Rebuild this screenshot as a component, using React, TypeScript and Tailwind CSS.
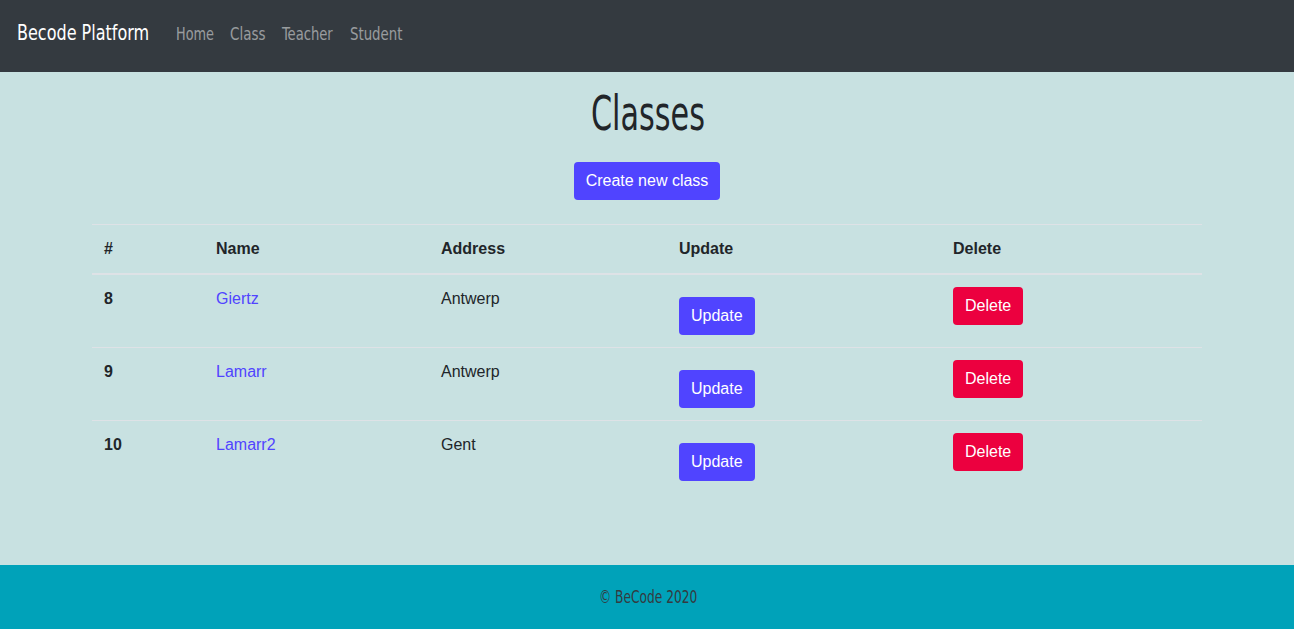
const rows = [
  { id: 8, name: 'Giertz', address: 'Antwerp' },
  { id: 9, name: 'Lamarr', address: 'Antwerp' },
  { id: 10, name: 'Lamarr2', address: 'Gent' },
];

const condensed = "font-['DejaVu_Sans_Condensed','DejaVu_Sans',sans-serif]";

// squeezes the condensed face to the narrow display look of the original
function Narrow({ box, scale, children }: { box: string; scale: string; children: string }) {
  return (
    <span className={`inline-block ${box}`}>
      <span className={`inline-block origin-left whitespace-nowrap ${scale}`}>{children}</span>
    </span>
  );
}

export default function App() {
  return (
    <div className="flex min-h-[629px] flex-col bg-[#c8e1e1] font-['Liberation_Sans',Arial,sans-serif] text-[#212529]">
      <nav className={`${condensed} flex h-[72px] items-center bg-[#343a40] pb-[6px] pl-[17px]`}>
        <a className="mr-6 text-[22px] leading-[30px] text-white">
          <Narrow box="w-[135px]" scale="scale-x-[0.81]">Becode Platform</Narrow>
        </a>
        <ul className="flex gap-[17px] pt-[1px] text-[17px] leading-[24px] text-white/50">
          <li><Narrow box="w-[37px]" scale="scale-x-[0.84]">Home</Narrow></li>
          <li><Narrow box="w-[35px]" scale="scale-x-[0.88]">Class</Narrow></li>
          <li><Narrow box="w-[51px]" scale="scale-x-[0.86]">Teacher</Narrow></li>
          <li><Narrow box="w-[52px]" scale="scale-x-[0.87]">Student</Narrow></li>
        </ul>
      </nav>

      <main className="flex-1">
        <div className="mx-auto w-[1110px]">
          <h1 className={`${condensed} mt-[12px] text-center text-[48px] leading-[58px]`}>
            <Narrow box="w-[113px]" scale="scale-x-[0.70]">Classes</Narrow>
          </h1>
          <div className="mt-[20px] flex justify-center">
            <button className="h-[38px] rounded bg-[#5044ff] px-3 text-[16px] text-white">Create new class</button>
          </div>
          <table className="mt-[24px] w-full border-collapse text-left text-[16px]">
            <thead>
              <tr className="border-t border-b-2 border-[#dee2e6]">
                <th className="w-[112px] px-3 py-3 leading-6">#</th>
                <th className="w-[225px] px-3 py-3 leading-6">Name</th>
                <th className="w-[238px] px-3 py-3 leading-6">Address</th>
                <th className="w-[274px] px-3 py-3 leading-6">Update</th>
                <th className="px-3 py-3 leading-6">Delete</th>
              </tr>
            </thead>
            <tbody>
              {rows.map((r) => (
                <tr key={r.id} className="border-t border-[#dee2e6] align-top first:border-t-0">
                  <td className="px-3 py-3 font-bold leading-6">{r.id}</td>
                  <td className="px-3 py-3 leading-6 text-[#5044ff]">{r.name}</td>
                  <td className="px-3 py-3 leading-6">{r.address}</td>
                  <td className="px-3 py-3 leading-6">
                    <button className="mt-[10px] block h-[38px] rounded bg-[#5044ff] px-3 text-white">Update</button>
                  </td>
                  <td className="px-3 py-3 leading-6">
                    <button className="block h-[38px] rounded bg-[#ec003f] px-3 text-white">Delete</button>
                  </td>
                </tr>
              ))}
            </tbody>
          </table>
        </div>
      </main>

      <footer className={`${condensed} flex h-[64px] items-center justify-center bg-[#00a2b9] pt-[2px] text-[17px] text-[#343a40]`}>
        <Narrow box="w-[97px]" scale="scale-x-[0.80]">© BeCode 2020</Narrow>
      </footer>
    </div>
  );
}
